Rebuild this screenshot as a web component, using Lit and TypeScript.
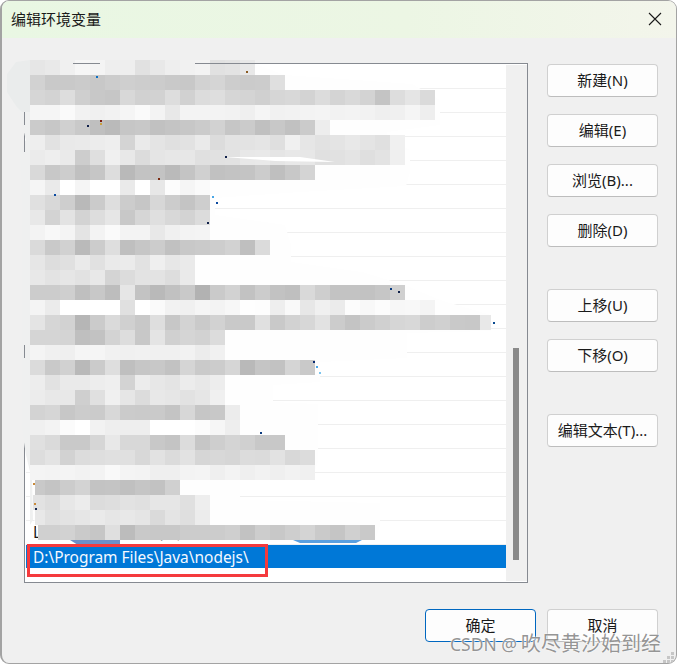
import { LitElement, html, css, svg } from "lit";
import { customElement } from "lit/decorators.js";

// One mosaic row: y, tile tones (grey hex), first x, last x
type Row = [number, string, number?, number?];

const TILE = 15;
const ROWS: Row[] = [
  [60, "e6 e9 f0 f6 f4 ee ee e1 e8 ee f1 f3 e1 e3 e8"],
  [75, "d2 c9 c9 cb c8 cc cf cd cc c9 c8 d2 d5 cd cb cc df"],
  [90, "d6 d3 dd cf c8 c6 d8 d1 d2 dd d1 dc de d6 d4 d0 d6 d8 d3 dc d4 d9 d3 c4 dd e5 da"],
  [105, "f5 f5 fa f2 f0 f2 f5 fa f3 e8 f3 f3 f3 f2 ef f5 f1 f2 f3 f4 f2 f3 f2 ef f0 f5 ee"],
  [120, "cb c7 d0 c9 bf ba c6 c8 c1 c4 c7 cb d2 c6 cb c0 c8 c1 cb ed"],
  [135, "ee e2 e9 ea ec ee d4 ea e4 e0 e2 ea dc e3 e3 e5 df f0 e6 e2 e4 e8 e4 e0 f0"],
  [150, "eb ee ea cd df f0 e8 dc e5 e7 e7 e0 e1 e2 e8 e9 e5 e8 e7 e0 e1 e4 df e3 ef"],
  [165, "d9 c8 cd c0 c6 dd b9 c3 c3 ba c4 d0 c1 c3 c4 cc bf c8 d4"],
  [180, "f5 ea ff f5 ff ff ea ff e7 fc f5 fa"],
  [195, "e0 d8 ce b9 cb de cc c6 d7 cc c4 ce"],
  [210, "e8 d3 e3 d3 dd e6 c8 d6 df d8 d3 dc"],
  [225, "f3 f8 f4 e4 f3 fa f3 f3 e8 f0 f3 f4"],
  [240, "da c9 d1 ba cc de bf c6 cc c1 c8 ca cd d2 bf db"],
  [255, "e6 dd e0 ea e1 ea eb e2 ef e7 ea"],
  [270, "e8 e3 e6 e2 e8 d4 dc e3 e3 dd ea"],
  [285, "cc cc cf bf c8 bd e6 c3 b9 c1 c9 b2 ca d2 c2 cc c2 bf d9 ce c3 c3 c2 c6 d0"],
  [300, "f4 eb ff ff ff ff e0 ff fa f2 f0 f5 f3 f7 fe fd ee f9 e7 f0 eb fc f8 fc f7 f8 f4"],
  [315, "e4 d6 d2 b6 cb da d0 c8 de c7 d3 ca d2 c9 c9 e0 c9 d2 d7 e2 cc c4 cb d0 d6 d8 cd d0 c9 c8 e8", 30, 491],
  [330, "d5 d5 d4 bf c2 d3 dd c8 e4 d0 d5 d2 dc"],
  [345, "f4 f0 ef f5 f5 f1 f0 f1 f0 f0 f2 ec f1"],
  [360, "db c9 d1 b9 cb de bf c6 c8 c2 d5 ca cc d6 b9 c5 c2 d5 c9"],
  [375, "ed e2 ea ea ed ef d3 ec e7 e4 ec e8 ed"],
  [390, "ec e8 e8 cf e0 f0 e6 dc e8 e6 e2 e6 f0"],
  [405, "d3 d6 c7 cc cb d8 cb ca ca c4 d7 c6 c8 ec"],
  [420, "f0 f3 fb ff f2 ee ee ee ff ff ff fc f6 ee"],
  [435, "e0 da c9 c9 d6 e8 d8 d8 c8 c4 dc c6 ce d4 d0 c8 c8"],
  [450, "dd e3 d2 dc de e0 e0 d8 e2 db e2 d6 d8 d6 dc db e2 d8 dc"],
  [465, "f4 f3 f4 f2 f3 f9 f4 f3 ef ef f3 f4 ef f3 ef f2 ef f2 f0"],
  [480, "c9 c4 cc d3 c3 c4 c0 c5 c2 d0", 35],
  [495, "e2 dd e7 ec dc de e2 e0 e6 e6 e0 ee", 33],
  [510, "e8 e0 e3 e6 ea e6 e8 e5 da e4 df ec", 35],
  [525, "d0 d0 d2 ca c6 df bc c9 c8 c8 cc cc cc cf c2 cd c8 ce d4 ca c5 d0 c9", 38],
];

const WHITE =
  "M30 64 L255 64 L285 75 L412 84 L440 100 L440 125 L387 132 L387 140 L410 150 L410 172 L406 186 L300 192 L215 198 L215 215 L285 225 L291 245 L291 262 L362 272 L405 285 L440 300 L491 315 L491 331 L407 333 L407 358 L320 362 L320 382 L273 385 L273 402 L318 404 L318 462 L315 470 L240 480 L240 500 L380 503 L380 525 L375 540 L290 542 L182 543 L178 540 L135 540 L130 545 L40 545 L30 500 Z";
const SMUDGE =
  "M30 60 L16 62 L7 74 L7 92 L20 112 L22 125 L26 140 L20 150 L22 200 L22 430 L26 455 L32 480 L33 520 L30 525 L30 60 Z";
const BLOB = "M30 60 L16 62 L7 74 L7 92 L16 106 L22 112 L30 112 Z";
const BORDER_REVEALS = [
  [73, 63, 27, 1],
  [195, 63, 332, 1],
  [24, 112, 1, 13],
  [24, 142, 1, 10],
  [24, 345, 1, 13],
];
const SPECKS: [number, number, string][] = [
  [96, 76, "#0b6fc4"], [246, 71, "#8a5a20"], [100, 120, "#7a1a10"], [100, 123, "#c8a040"],
  [87, 125, "#10204a"], [225, 156, "#10204a"], [158, 178, "#7a2a10"], [54, 194, "#0a4aa0"],
  [216, 202, "#0a4aa0"], [207, 222, "#10204a"], [212, 196, "#49a6e6"], [313, 361, "#0a2a70"],
  [316, 366, "#49a6e6"], [319, 372, "#7cc4ee"], [260, 432, "#0a3a80"], [493, 322, "#0a4a90"],
  [390, 288, "#0a3a80"], [398, 291, "#10204a"], [33, 483, "#c98a3a"], [34, 503, "#c98a3a"],
  [35, 508, "#1a2a50"],
];
const SCRAPS: [number, number, string][] = [
  [18, 6, "#c98a3a"], [24, 3, "#3a5a8a"], [54, 4, "#c07a30"], [84, 6, "#2a3a70"],
  [140, 3, "#5a5a5a"], [180, 2, "#c08a40"], [320, 2, "#5a5a5a"], [375, 3, "#6a4a30"],
  [475, 8, "#d08a30"], [545, 3, "#3a5a8a"], [500, 2, "#c08a40"],
];
const GRIP = [[671, 652], [667, 656], [671, 656], [663, 660], [667, 660], [671, 660]];

const SIDE_GROUPS = [
  ["新建(N)", "编辑(E)", "浏览(B)...", "删除(D)"],
  ["上移(U)", "下移(O)"],
  ["编辑文本(T)..."],
];

@customElement("app-root")
export class AppRoot extends LitElement {
  static styles = css`
    :host {
      display: block;
      width: 677px;
      height: 664px;
      background: #fff;
      font-family: "Noto Sans", "Noto Sans CJK SC", sans-serif;
      font-size: 15px;
      color: #1a1a1a;
      overflow: hidden;
    }
    .window {
      position: relative;
      box-sizing: border-box;
      width: 677px;
      height: 664px;
      display: flex;
      flex-direction: column;
      background: #f0f0f0;
      border: 1px solid #a3a3a3;
      border-left-width: 2px;
      border-radius: 9px;
      overflow: hidden;
    }
    .title {
      flex: none;
      height: 37px;
      box-sizing: border-box;
      padding: 0 14px 2px 9px;
      display: flex;
      align-items: center;
      justify-content: space-between;
      background: linear-gradient(90deg, #e9f7e3 0%, #ecf6e4 60%, #f3f5eb 100%);
      line-height: 34px;
    }
    .close {
      width: 14px;
      height: 14px;
      display: block;
    }
    .body {
      flex: 1;
      display: flex;
      gap: 19px;
      padding: 25px 0 0 22px;
      align-items: flex-start;
    }
    .list {
      box-sizing: border-box;
      width: 504px;
      height: 520px;
      flex: none;
      display: flex;
      background: #fff;
      border: 1px solid #868a91;
    }
    .rows {
      flex: 1;
      padding-top: 1px;
      min-width: 0;
    }
    .row {
      box-sizing: border-box;
      height: 24px;
      margin-left: 1px;
      border-bottom: 1px solid #efefef;
      padding-left: 7px;
      line-height: 23px;
      font-size: 15.45px;
      white-space: nowrap;
      display: flex;
      gap: 88px;
    }
    .row.selected {
      height: 23px;
      background: #0078d7;
      color: #f4f9ff;
      border-bottom: 0;
      line-height: 24px;
    }
    .track {
      flex: none;
      width: 21px;
      margin-top: 1px;
      background: #f0f0f0;
      margin-bottom: 1px;
      display: flex;
      flex-direction: column;
      align-items: flex-start;
      padding: 283px 0 0 7px;
      box-sizing: border-box;
    }
    .thumb {
      width: 6px;
      height: 212px;
      background: #8a8a8a;
    }
    .side {
      display: flex;
      flex-direction: column;
      gap: 25px;
      padding-top: 1px;
    }
    .side .group {
      display: flex;
      flex-direction: column;
      gap: 17px;
    }
    .side .group + .group {
      margin-top: 17px;
    }
    button {
      box-sizing: border-box;
      width: 111px;
      height: 33px;
      padding: 0 0 3px;
      font: inherit;
      color: inherit;
      background: #fdfdfd;
      border: 1px solid #d0d0d0;
      border-bottom-color: #bdbdbd;
      border-radius: 4px;
      white-space: nowrap;
    }
    button.default {
      border: 1px solid #0067c0;
    }
    .footer {
      flex: none;
      display: flex;
      justify-content: flex-end;
      gap: 11px;
      padding: 0 18px 21px 0;
    }
    .overlay {
      position: absolute;
      left: -2px;
      top: -1px;
      width: 677px;
      height: 664px;
      pointer-events: none;
    }
    .mark {
      position: absolute;
      right: 15px;
      top: 628px;
      color: rgba(120, 120, 120, 0.8);
      font-size: 20px;
      line-height: 30px;
      white-space: nowrap;
      text-shadow: 0 0 1px #fff, 0 0 2px #fff;
    }
    .mark .latin {
      font-size: 17.5px;
      margin-right: 4px;
    }
  `;

  private overlay() {
    return html`<svg class="overlay" viewBox="0 0 677 664" aria-hidden="true">
      <path d=${WHITE} fill="#fefefe"></path>
      <path d=${SMUDGE} fill="#eff0f0"></path>
      <path d=${BLOB} fill="#eaecec"></path>
      ${ROWS.map(([y, tones, start, end]) => {
        const first = start ?? 30;
        return tones.split(" ").map((t, i) => {
          const x0 = 30 + i * TILE;
          const x = Math.max(x0, first);
          const right = end !== undefined ? Math.min(x0 + TILE, end) : x0 + TILE;
          return svg`<rect x=${x} y=${y} width=${right - x} height=${TILE} fill=${`#${t}${t}${t}`}></rect>`;
        });
      })}
      <path d="M225 157 L300 157 L335 162 L275 161 Z" fill="#fff"></path>
      <path d="M70 540 L120 540 L120 545 L78 545 Z" fill="#6d8fc8"></path>
      <path d="M293 540 L362 540 L356 543 L300 543 Z" fill="#5aa0e0"></path>
      ${BORDER_REVEALS.map(
        ([x, y, w, h]) => svg`<rect x=${x} y=${y} width=${w} height=${h} fill="#868a91"></rect>`
      )}
      ${SPECKS.map(([x, y, c]) => svg`<rect x=${x} y=${y} width="2" height="2" fill=${c}></rect>`)}
      ${SCRAPS.map(([y, h, c]) => svg`<rect x="0" y=${y} width="1" height=${h} fill=${c}></rect>`)}
      <rect x="28.5" y="545.5" width="238" height="30" fill="none" stroke="#f53a3d" stroke-width="3"></rect>
      ${GRIP.map(([x, y]) => svg`<rect x=${x} y=${y} width="3" height="3" fill="#c6c6c6"></rect>`)}
    </svg>`;
  }

  render() {
    return html`<div class="window">
      <div class="title">
        <span>编辑环境变量</span>
        <svg class="close" viewBox="0 0 14 14" aria-label="关闭">
          <path d="M1 1 L13 13 M13 1 L1 13" stroke="#1a1a1a" stroke-width="1.1" fill="none"></path>
        </svg>
      </div>
      <div class="body">
        <div class="list">
          <div class="rows">
            ${Array.from({ length: 19 }, () => html`<div class="row"></div>`)}
            <div class="row"><span>D:</span><span>es\\(W)</span></div>
            <div class="row selected"><span>D:\\Program Files\\Java\\nodejs\\</span></div>
          </div>
          <div class="track"><div class="thumb"></div></div>
        </div>
        <div class="side">
          ${SIDE_GROUPS.map(
            (g) => html`<div class="group">${g.map((t) => html`<button>${t}</button>`)}</div>`
          )}
        </div>
      </div>
      <div class="footer">
        <button class="default">确定</button>
        <button>取消</button>
      </div>
      ${this.overlay()}
      <div class="mark"><span class="latin">CSDN @</span>吹尽黄沙始到经</div>
    </div>`;
  }
}
